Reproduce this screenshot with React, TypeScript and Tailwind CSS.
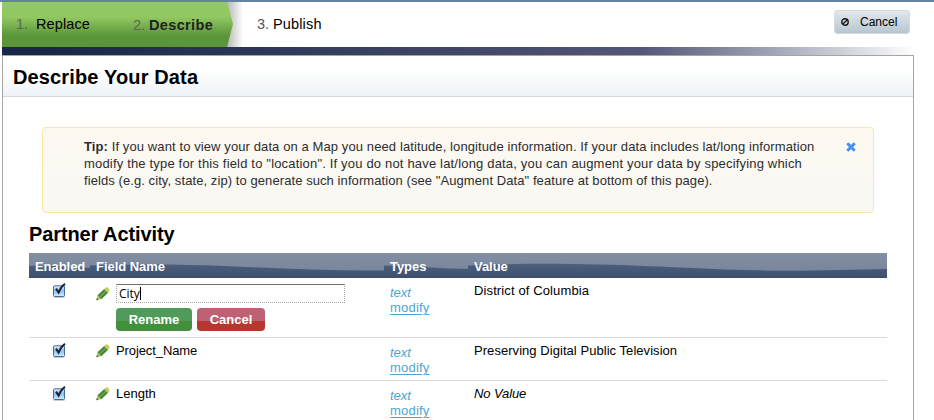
import React from "react";

function CheckedBox() {
  return (
    <svg width="16" height="18" viewBox="0 0 16 18" className="block">
      <defs>
        <linearGradient id="box" x1="0" y1="0" x2="0" y2="1">
          <stop offset="0" stopColor="#e4effa" />
          <stop offset="0.45" stopColor="#8fbdee" />
          <stop offset="1" stopColor="#c9f2ff" />
        </linearGradient>
      </defs>
      <rect x="1.5" y="14" width="11" height="1" fill="#c9c9cf" />
      <rect x="1.5" y="2.8" width="11" height="10.7" rx="1" fill="url(#box)" stroke="#47699f" />
      <path d="M4 5.6 L6.6 9.6 C8 6 10 2.8 13 0.8" fill="none" stroke="#1b2536" strokeWidth="2" />
    </svg>
  );
}

function Pencil() {
  return (
    <svg width="14" height="14" viewBox="0 0 14 14" className="block">
      <path d="M0.3 13.2 L1.5 8.2 L5.6 12 Z" fill="#a6c65c" />
      <path d="M0.3 13.2 L0.9 11.1 L2.5 12.7 Z" fill="#4a5a3a" />
      <path d="M1.5 8.3 L8.2 1.9 L12.1 5.7 L5.4 12.2 Z" fill="#4b8637" />
      <path d="M3.4 10.2 L10.2 3.8" stroke="#76ac5a" strokeWidth="1.1" />
      <path d="M8.2 1.9 L9.8 0.6 Q11 0 12.2 0.9 L13 1.8 Q13.8 2.9 13.2 4.3 L12.1 5.7 Z" fill="#b9d35c" />
    </svg>
  );
}

function HeadCell({ label, width, wave }: { label: string; width: number; wave: string }) {
  return (
    <div className="relative h-[25px] overflow-hidden bg-linear-to-b from-[#838fa3] to-[#74829a]">
      <svg className="absolute inset-0" width={width} height="25">
        <defs>
          <linearGradient id="deep" gradientUnits="userSpaceOnUse" x1="0" y1="11" x2="0" y2="25">
            <stop offset="0" stopColor="#4b5f7e" />
            <stop offset="1" stopColor="#3d4f6c" />
          </linearGradient>
        </defs>
        <path d={wave} fill="url(#deep)" />
      </svg>
      <span className="relative block whitespace-nowrap pl-[6px] pt-[1px] text-[13px] leading-[25px] font-bold tracking-[-0.05px] text-white">
        {label}
      </span>
    </div>
  );
}

function TypeLinks() {
  return (
    <div className="pl-[6px] text-[13px] leading-[15px] text-[#4ba6d3]">
      <div className="italic">text</div>
      <div className="tracking-[0.2px] underline underline-offset-2">modify</div>
    </div>
  );
}

function Row({
  name,
  value,
  editing,
  last,
}: {
  name: React.ReactNode;
  value: React.ReactNode;
  editing?: boolean;
  last?: boolean;
}) {
  return (
    <div
      className={`grid grid-cols-[61px_294px_84px_419px] ${last ? "" : "border-b border-[#dadada]"}`}
    >
      <div className="pt-[5px] pl-[23px]">
        <CheckedBox />
      </div>
      <div className="flex gap-[6px] pl-[6px] pt-[5px]">
        <div className={editing ? "pt-[4px]" : "pt-[1px]"}>
          <Pencil />
        </div>
        {name}
      </div>
      <div className="pt-[7px] pb-[5px]">
        <TypeLinks />
      </div>
      <div className="pl-[6px] pt-[5px] text-[13px] leading-[16px]">{value}</div>
    </div>
  );
}

export default function App() {
  return (
    <div className="h-[420px] w-[934px] overflow-hidden bg-white font-['Liberation_Sans',Arial,sans-serif] text-black">
      <div className="h-[2px] bg-[#6384a0]" />
      <header className="flex h-[45px] pl-[2px]">
        <div className="relative w-[231px]">
          <div className="absolute top-0 left-[225px] h-[45px] w-[16px] bg-linear-to-r from-[#b8b8b8] to-white" />
          <svg className="absolute top-0 left-0" width="232" height="45">
            <defs>
              <linearGradient id="green" x1="0" y1="0" x2="0" y2="1">
                <stop offset="0" stopColor="#93c964" />
                <stop offset="0.33" stopColor="#91c862" />
                <stop offset="0.75" stopColor="#5c963a" />
                <stop offset="1" stopColor="#5b9539" />
              </linearGradient>
            </defs>
            <path d="M0 0 H225 L231 22 L225 45 H0 Z" fill="url(#green)" />
          </svg>
          <div className="relative flex whitespace-nowrap pl-[14px] pt-[13px] text-[14.5px] leading-[18px]">
            <span className="w-[20px] text-[#5c6a50]">1.</span>
            <span className="w-[97px] tracking-[0.1px]">Replace</span>
            <span className="w-[16px] pt-[1px] text-[#5c6a50]">2.</span>
            <span className="pt-[1px] font-bold tracking-[0.35px] text-[#222]">Describe</span>
          </div>
        </div>
        <div className="flex whitespace-nowrap pl-[24px] pt-[13px] text-[14.5px] leading-[18px]">
          <span className="w-[16px] text-[#555]">3.</span>
          <span className="tracking-[0.15px]">Publish</span>
        </div>
        <button className="mt-[8px] mr-[24px] ml-auto flex h-[24px] w-[76px] items-center rounded-[3px] border border-[#d5dade] bg-linear-to-b from-[#e2e7ea] to-[#b6c7d1] pl-[6px] text-[12px]">
          <svg width="8" height="8" viewBox="0 0 8 8" className="mr-[11px]">
            <circle cx="4" cy="4" r="3.2" fill="none" stroke="#111" strokeWidth="1.4" />
            <path d="M2 6 L6 2" stroke="#111" strokeWidth="1.2" />
          </svg>
          Cancel
        </button>
      </header>
      <div className="ml-[2px] h-[8px] w-[912px] bg-linear-to-r from-[#182748] from-5% via-[#535775] via-70% to-white" />
      <main className="ml-[2px] h-[400px] w-[912px] border border-[#a4a4a6] bg-white">
        <div className="h-[41px] border-b border-[#d8d8da] bg-linear-to-b from-white from-35% to-[#eef3f8] pl-[10px]">
          <h1 className="whitespace-nowrap text-[20px] leading-[42px] font-bold tracking-[0.14px]">Describe Your Data</h1>
        </div>
        <section className="mt-[30px] ml-[39px] flex h-[86px] w-[832px] items-start rounded-[4px] border border-[#f7e9a4] bg-linear-to-b from-[#fdf9f1] to-[#f9f8f4] pt-[10px] pl-[41px]">
          <p className="w-[761px] whitespace-nowrap text-[13px] leading-[17px] text-[#2d2d2d]">
            <span className="block tracking-[0.102px]">
              <b>Tip:</b> If you want to view your data on a Map you need latitude, longitude information. If your data includes lat/long information
            </span>
            <span className="block tracking-[0.178px]">
              modify the type for this field to "location". If you do not have lat/long data, you can augment your data by specifying which
            </span>
            <span className="block tracking-[0.08px]">
              fields (e.g. city, state, zip) to generate such information (see "Augment Data" feature at bottom of this page).
            </span>
          </p>
          <svg width="10" height="10" viewBox="0 0 10 10" className="mt-[4px] ml-[1px]">
            <path d="M1.3 1.3 L8.7 8.7 M8.7 1.3 L1.3 8.7" stroke="#4a90f0" strokeWidth="3" />
          </svg>
        </section>
        <div className="ml-[26px] w-[858px]">
          <h2 className="h-[40px] whitespace-nowrap text-[20px] leading-[42px] font-bold tracking-[-0.1px]">Partner Activity</h2>
          <div className="grid grid-cols-[61px_294px_84px_419px]">
            <HeadCell label="Enabled" width={61} wave="M0 13 C20 12 42 14 61 15 V25 H0 Z" />
            <HeadCell label="Field Name" width={294} wave="M0 12.5 C40 11 90 11 135 13 C190 15.5 240 18 294 17.5 V25 H0 Z" />
            <HeadCell label="Types" width={84} wave="M0 12.5 C30 12.5 60 16 84 16 V25 H0 Z" />
            <HeadCell label="Value" width={419} wave="M0 12.5 C40 10.5 90 10.5 132 11.5 C200 13 260 18 320 17.7 C350 17.7 390 16.5 419 16 V25 H0 Z" />
          </div>
          <Row
            editing
            name={
              <div>
                <div className="mt-[1px] flex h-[19px] w-[229px] items-center border border-dotted border-[#a8a8a8] [border-top:1px_solid_#707070] pl-[2px] font-['Open_Sans',sans-serif] text-[12px]">
                  City
                  <span className="h-[13px] w-px bg-black" />
                </div>
                <div className="mt-[5px] mb-[6px] flex gap-[5px] text-[13px] font-bold text-white">
                  <button className="h-[23px] w-[76px] rounded-[4px] bg-linear-to-b from-[#509a5b] from-55% to-[#438f3e] to-55%">
                    Rename
                  </button>
                  <button className="h-[23px] w-[68px] rounded-[4px] bg-linear-to-b from-[#be6175] from-55% to-[#b63630] to-55%">
                    Cancel
                  </button>
                </div>
              </div>
            }
            value={<span className="tracking-[0.12px]">District of Columbia</span>}
          />
          <Row
            name={<span className="text-[13px] leading-[16px] tracking-[-0.1px]">Project_Name</span>}
            value={<span className="tracking-[0.05px]">Preserving Digital Public Television</span>}
          />
          <Row
            last
            name={<span className="text-[13px] leading-[16px]">Length</span>}
            value={<i className="tracking-[-0.1px]">No Value</i>}
          />
        </div>
      </main>
    </div>
  );
}
